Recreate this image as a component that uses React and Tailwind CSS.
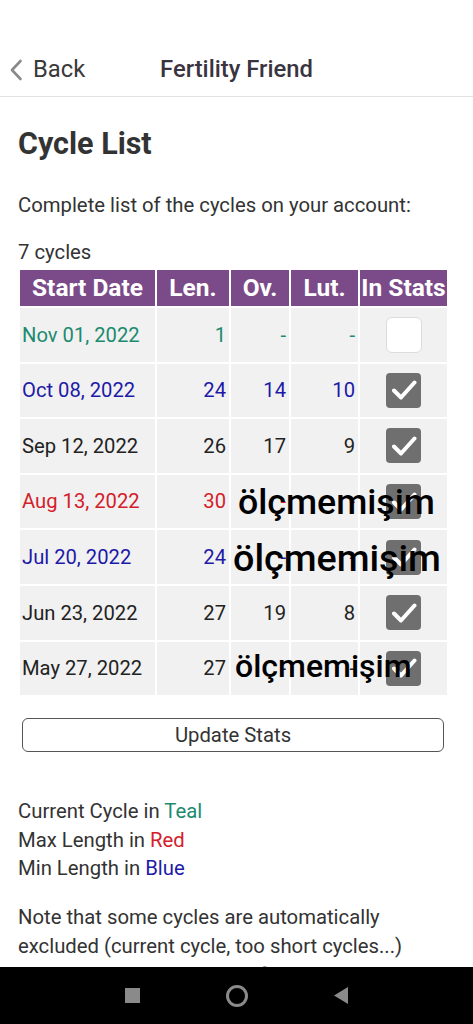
import React from "react";

const rows = [
  { d: "Nov 01, 2022", l: "1", o: "-", u: "-", c: "text-[#1b8a6f]", checked: false },
  { d: "Oct 08, 2022", l: "24", o: "14", u: "10", c: "text-[#1d1aa8]", checked: true },
  { d: "Sep 12, 2022", l: "26", o: "17", u: "9", c: "text-[#222222]", checked: true },
  { d: "Aug 13, 2022", l: "30", o: "-", u: "-", c: "text-[#d4202a]", checked: true },
  { d: "Jul 20, 2022", l: "24", o: "-", u: "-", c: "text-[#1d1aa8]", checked: true },
  { d: "Jun 23, 2022", l: "27", o: "19", u: "8", c: "text-[#222222]", checked: true },
  { d: "May 27, 2022", l: "27", o: "-", u: "-", c: "text-[#222222]", checked: true },
];

function Check({ checked }) {
  if (!checked) {
    return <div className="w-[36px] h-[36px] rounded-[6px] bg-white border border-[#dcdcdc]" />;
  }
  return (
    <div className="w-[35px] h-[35px] rounded-[4px] bg-[#6f6f6f] flex items-center justify-center">
      <svg width="26" height="22" viewBox="0 0 26 22" fill="none">
        <path d="M3 11.5 L10 18.5 L23.5 3.5" stroke="white" strokeWidth="4" strokeLinecap="round" strokeLinejoin="round" />
      </svg>
    </div>
  );
}

export default function App() {
  return (
    <div className="relative w-full h-[1024px] flex flex-col bg-white overflow-hidden font-['Roboto',sans-serif] text-[#333333]">
      <div className="h-[44px] shrink-0" />
      <div className="h-[53px] shrink-0 border-b border-[#e2e2e2] grid grid-cols-[1fr_auto_1fr] items-center">
        <div className="flex items-center pl-[9px] gap-[10px]">
          <svg width="14" height="22" viewBox="0 0 14 22" fill="none">
            <path d="M11.5 2 L3 11 L11.5 20" stroke="#8a8a8a" strokeWidth="2.6" strokeLinecap="round" strokeLinejoin="round" />
          </svg>
          <span className="text-[23.8px] text-[#3a3a3a]">Back</span>
        </div>
        <div className="text-[23.8px] font-medium text-[#3a3440]">Fertility Friend</div>
        <div />
      </div>

      <div className="flex-1 overflow-hidden px-[18px]">
        <h1 className="mt-[29px] text-[30.5px] leading-[36px] font-bold text-[#333333]">Cycle List</h1>
        <p className="mt-[29px] text-[20.3px] leading-[28px]">Complete list of the cycles on your account:</p>
        <p className="mt-[19px] text-[20.3px] leading-[28px]">7 cycles</p>

        <div className="mt-[4px] mx-[2px] grid grid-cols-[135px_72px_58px_67px_87px] gap-[2px]">
          {["Start Date", "Len.", "Ov.", "Lut.", "In Stats"].map((h) => (
            <div key={h} className="h-[36px] bg-[#7b4a88] text-white text-[24.5px] font-bold flex items-center justify-center whitespace-nowrap">
              {h}
            </div>
          ))}
          {rows.map((r) => (
            <React.Fragment key={r.d}>
              <div className={`h-[53.6px] bg-[#f1f1f1] flex items-center pl-[2px] text-[20.2px] ${r.c}`}>{r.d}</div>
              <div className={`h-[53.6px] bg-[#f1f1f1] flex items-center justify-end pr-[3px] text-[20.2px] ${r.c}`}>{r.l}</div>
              <div className={`h-[53.6px] bg-[#f1f1f1] flex items-center justify-end pr-[3px] text-[20.2px] ${r.c}`}>{r.o}</div>
              <div className={`h-[53.6px] bg-[#f1f1f1] flex items-center justify-end pr-[3px] text-[20.2px] ${r.c}`}>{r.u}</div>
              <div className="h-[53.6px] bg-[#f1f1f1] flex items-center justify-center">
                <Check checked={r.checked} />
              </div>
            </React.Fragment>
          ))}
        </div>

        <button className="mt-[23px] ml-[4px] w-[422px] h-[34px] border border-[#555555] rounded-[6px] text-[20.3px] text-[#333333] flex items-center justify-center">
          Update Stats
        </button>

        <div className="mt-[45px] text-[20.3px] leading-[28.5px]">
          <div>Current Cycle in <span className="text-[#1b8a6f]">Teal</span></div>
          <div>Max Length in <span className="text-[#d4202a]">Red</span></div>
          <div>Min Length in <span className="text-[#1d1aa8]">Blue</span></div>
        </div>

        <p className="mt-[20px] text-[20.3px] leading-[29px]">
          Note that some cycles are automatically excluded (current cycle, too short cycles...) because they are not used for predictions.
        </p>
      </div>

      <div className="h-[57px] shrink-0 bg-black flex items-center justify-center gap-[86px]">
        <div className="w-[15px] h-[15px] bg-[#8a8a8a]" />
        <div className="w-[22px] h-[22px] rounded-full border-[3px] border-[#8a8a8a]" />
        <svg width="14" height="17" viewBox="0 0 14 17">
          <path d="M14 0 L14 17 L0 8.5 Z" fill="#8a8a8a" />
        </svg>
      </div>

      <span className="absolute left-[238px] top-[485px] text-[35.7px] leading-none font-medium text-black whitespace-nowrap">ölçmemişim</span>
      <span className="absolute left-[233px] top-[540px] text-[37.7px] leading-none font-medium text-black whitespace-nowrap">ölçmemişim</span>
      <span className="absolute left-[235px] top-[650px] text-[32px] leading-none font-medium text-black whitespace-nowrap">ölçmemişim</span>
    </div>
  );
}
